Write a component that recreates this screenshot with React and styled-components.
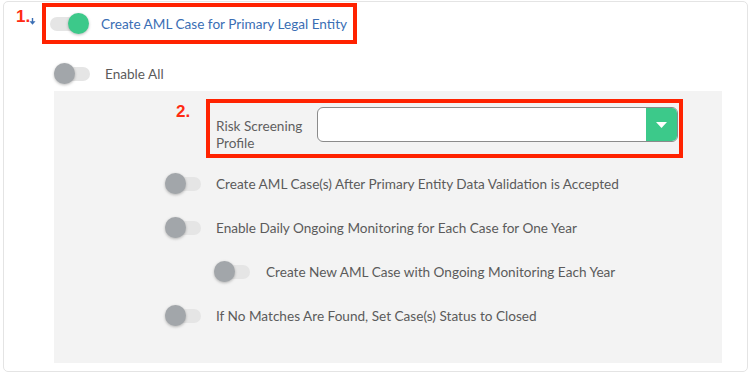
import React from "react";
import styled, { createGlobalStyle } from "styled-components";

const Global = createGlobalStyle`
  html, body { margin: 0; padding: 0; background: #ffffff; }
  body { font-family: Lato, "Open Sans", sans-serif; }
`;

const Card = styled.div`
  box-sizing: border-box;
  margin: 1px 0 0 3px;
  width: 745px;
  height: 371px;
  border: 1px solid #e4e4e4;
  border-radius: 5px;
  display: flex;
  flex-direction: column;
`;

const TopRow = styled.div`
  display: flex;
  align-items: flex-start;
  margin-top: 1px;
  padding-left: 12px;
`;

const Marker = styled.div`
  display: flex;
  align-items: flex-start;
  width: ${(p) => p.$w}px;
  font-family: "Liberation Sans", Arial, sans-serif;
  font-weight: 700;
  font-size: 17px;
  line-height: 17px;
  color: #ff2a12;
  padding-top: ${(p) => p.$top || 0}px;
  flex-shrink: 0;
`;

const TinyArrow = styled.svg`
  margin-top: 10px;
  margin-left: -1px;
`;

const HighlightBox = styled.div`
  box-sizing: border-box;
  border: 4px solid #ff2200;
  display: flex;
  align-items: ${(p) => p.$align || "center"};
  height: ${(p) => p.$h}px;
  width: ${(p) => p.$w}px;
  padding: ${(p) => p.$pad};
  gap: ${(p) => p.$gap || 0}px;
`;

const Track = styled.span`
  position: relative;
  display: inline-block;
  flex-shrink: 0;
  width: 36px;
  height: 14px;
  border-radius: 7px;
  background: #e5e5e5;
`;

const Knob = styled.span`
  position: absolute;
  top: -4px;
  left: ${(p) => (p.$on ? 18 : 0)}px;
  width: 21px;
  height: 21px;
  border-radius: 50%;
  background: ${(p) => (p.$on ? "#3cc98a" : "#a2a6aa")};
  box-shadow: 0 1px 3px rgba(0, 0, 0, 0.28);
`;

const Toggle = ({ on }) => (
  <Track>
    <Knob $on={on} />
  </Track>
);

const Label = styled.span`
  font-size: 13.6px;
  color: ${(p) => (p.$blue ? "#3a6eb4" : "#5b5b5b")};
  white-space: nowrap;
`;

const Row = styled.div`
  display: flex;
  align-items: center;
  height: ${(p) => p.$h || 44}px;
  padding-left: ${(p) => p.$indent}px;
  gap: ${(p) => p.$gap || 15}px;
`;

const EnableRow = styled(Row)`
  margin-top: 15px;
`;

const Panel = styled.div`
  flex: 1;
  margin: 3px 25px 8px 50px;
  background: #f3f3f3;
  padding: 8px 0 25px 0;
  display: flex;
  flex-direction: column;
`;

const ProfileRow = styled.div`
  display: flex;
  align-items: flex-start;
  padding-left: 122px;
  margin-bottom: 4px;
`;

const FieldLabel = styled.div`
  width: 101px;
  flex-shrink: 0;
  padding-top: 11px;
  font-size: 13.6px;
  line-height: 17px;
  color: #5f5f5f;
`;

const Select = styled.div`
  flex: 1;
  height: 35px;
  box-sizing: border-box;
  border: 1px solid #8b8b8b;
  border-radius: 6px;
  background: #ffffff;
  display: flex;
  justify-content: flex-end;
  overflow: hidden;
`;

const SelectButton = styled.div`
  width: 31px;
  background: #3cc98a;
  display: flex;
  align-items: center;
  justify-content: center;
`;

export default function App() {
  return (
    <>
      <Global />
      <Card>
        <TopRow>
          <Marker $w={26} $top={5}>
            1.
            <TinyArrow width="7" height="7" viewBox="0 0 7 7">
              <path d="M3.5 0 V4" stroke="#3a6eb4" strokeWidth="1.4" />
              <path d="M0.5 3.2 L6.5 3.2 L3.5 6.8 Z" fill="#3a6eb4" />
            </TinyArrow>
          </Marker>
          <HighlightBox $h={41} $w={315} $pad="0 4px" $gap={15}>
            <Toggle on />
            <Label $blue>Create AML Case for Primary Legal Entity</Label>
          </HighlightBox>
        </TopRow>

        <EnableRow $indent={50} $h={30}>
          <Toggle />
          <Label>Enable All</Label>
        </EnableRow>

        <Panel>
          <ProfileRow>
            <Marker $w={30} $top={4}>2.</Marker>
            <HighlightBox $h={59} $w={477} $pad="4px 1px 4px 6px" $align="flex-start">
              <FieldLabel>
                Risk Screening
                <br />
                Profile
              </FieldLabel>
              <Select>
                <SelectButton>
                  <svg width="11" height="6" viewBox="0 0 11 6">
                    <path d="M0 0 L11 0 L5.5 6 Z" fill="#ffffff" />
                  </svg>
                </SelectButton>
              </Select>
            </HighlightBox>
          </ProfileRow>

          <Row $indent={111}>
            <Toggle />
            <Label>Create AML Case(s) After Primary Entity Data Validation is Accepted</Label>
          </Row>
          <Row $indent={111}>
            <Toggle />
            <Label>Enable Daily Ongoing Monitoring for Each Case for One Year</Label>
          </Row>
          <Row $indent={160} $gap={16}>
            <Toggle />
            <Label>Create New AML Case with Ongoing Monitoring Each Year</Label>
          </Row>
          <Row $indent={111}>
            <Toggle />
            <Label>If No Matches Are Found, Set Case(s) Status to Closed</Label>
          </Row>
        </Panel>
      </Card>
    </>
  );
}
